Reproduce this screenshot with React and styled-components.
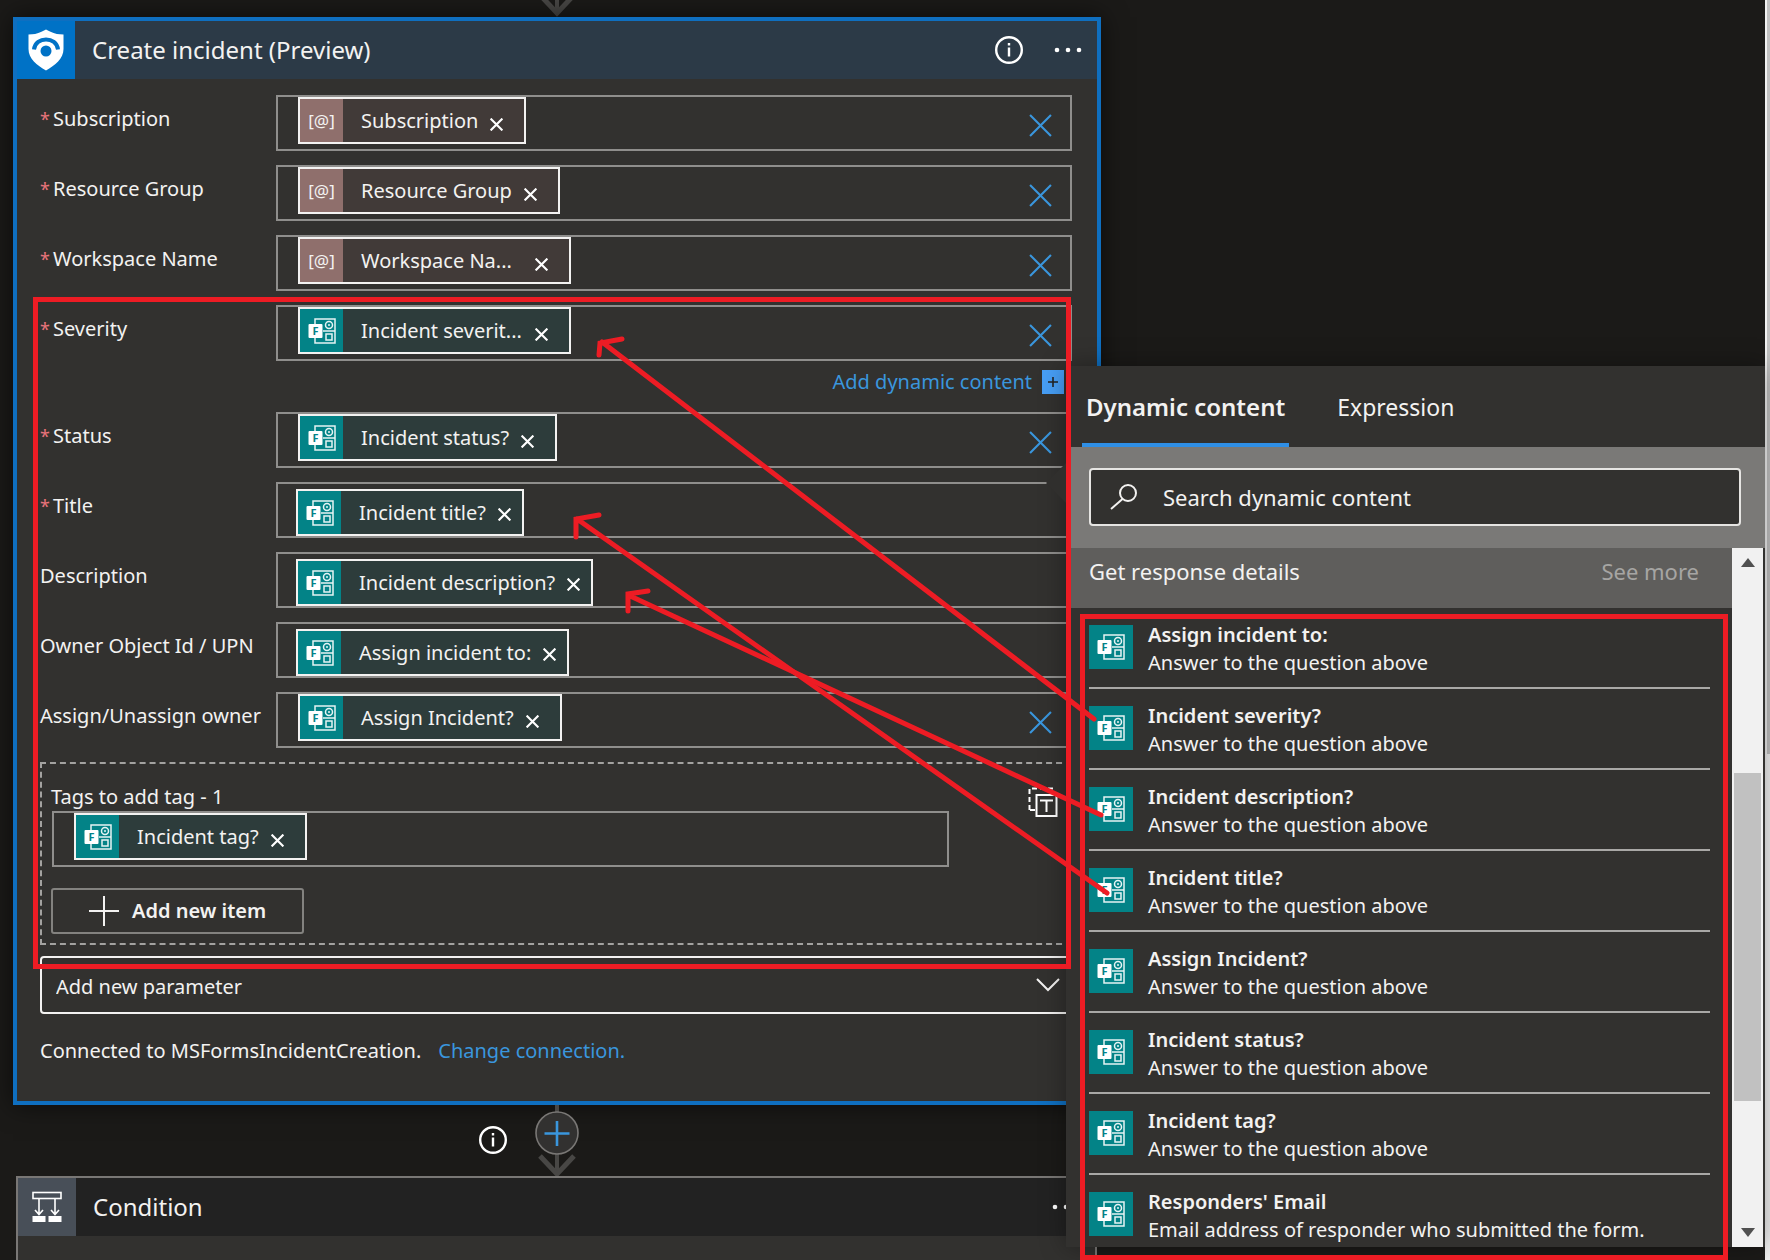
import React from "react";
import styled, { createGlobalStyle, css } from "styled-components";

const color = {
  page: "#1b1a18",
  surface: "#32312f",
  line: "#8f8e8c",
  text: "#f3f2f1",
  link: "#3a96dd",
  accent: "#0f6fc0",
  forms: "#038387",
  mark: "#ed1c24",
};

const GlobalStyle = createGlobalStyle`
  * { box-sizing: border-box; }
  html, body { margin: 0; background: ${color.page}; }
  body, button, input, select {
    font-family: "Segoe UI", "Noto Sans", "Open Sans", sans-serif;
    font-size: 20px;
    line-height: 28px;
    color: ${color.text};
  }
  button { background: none; border: 0; padding: 0; cursor: pointer; }
  svg { display: block; flex: none; }
`;

const Page = styled.main`
  position: relative;
  display: flex;
  height: 100vh;
  overflow: hidden;
`;

const Designer = styled.section`
  flex: 1;
  min-width: 0;
  padding-left: 13px;
  display: flex;
  flex-direction: column;
`;

const Connector = styled.div`
  position: relative;
  height: ${(p) => p.$height}px;
  flex: none;
  display: flex;
  justify-content: center;
`;

const InfoButton = styled.button`
  display: flex;
`;

const ConnectorInfo = styled(InfoButton)`
  position: absolute;
  top: 20px;
  right: calc(50% + 49px);
`;

const Card = styled.article`
  position: relative;
  flex: none;
  border: 4px solid ${color.accent};
  background: ${color.surface};
  box-shadow: 0 0 24px rgba(0, 0, 0, 0.6);
`;

const CardHeader = styled.header`
  display: flex;
  align-items: center;
  height: 58px;
  padding-right: 15px;
  gap: 30px;
  background: ${(p) => p.$bg};
`;

const HeaderIcon = styled.div`
  display: grid;
  place-items: center;
  width: 58px;
  height: 58px;
  background: ${(p) => p.$bg};
`;

const CardTitle = styled.h2`
  flex: 1;
  margin: 0 0 0 -13px;
  font-size: 24px;
  line-height: 32px;
  font-weight: 400;
`;

const CardBody = styled.div`
  padding: 16px 25px 36px 23px;
`;

const Row = styled.div`
  display: grid;
  grid-template-columns: 236px minmax(0, 1fr);
  margin-bottom: 14px;
`;

const Label = styled.label`
  padding-top: 10px;
  white-space: nowrap;
`;

const Required = styled.span`
  display: inline-block;
  width: 13px;
  font-size: 18px;
  color: #e8737b;
`;

const Field = styled.div`
  display: flex;
  align-items: ${(p) => (p.$low ? "flex-end" : "flex-start")};
  height: 56px;
  padding: 0 18px 0 ${(p) => (p.$low ? 18 : 20)}px;
  border: 2px solid ${color.line};
`;

const FieldInput = styled.input`
  flex: 1;
  min-width: 0;
  height: 48px;
  border: 0;
  outline: 0;
  background: transparent;
`;

const ClearButton = styled.button`
  margin-top: 17px;
`;

const Chip = styled.span`
  display: flex;
  height: 47px;
  border: 2px solid #f3f2f1;
  padding-right: ${(p) => (p.$low ? 11 : 21)}px;
  white-space: nowrap;
  background: ${(p) => (p.$kind === "forms" ? "#2d3c3b" : "#413a38")};
`;

const ChipIcon = styled.span`
  display: grid;
  place-items: center;
  width: 43px;
  margin-right: 18px;
  font-size: 17px;
  background: ${(p) => (p.$kind === "forms" ? color.forms : "#8f6f6c")};
`;

const ChipText = styled.span`
  min-width: ${(p) => (p.$clipped ? 162 : 0)}px;
  margin-right: 12px;
  line-height: 44px;
`;

const ChipRemove = styled.button`
  padding-top: ${(p) => (p.$low ? 4 : 8)}px;
`;

const DynamicLine = styled.div`
  display: flex;
  justify-content: flex-end;
  align-items: center;
  gap: 10px;
  height: 37px;
  padding: 4px 8px 0 0;
`;

const Link = styled.a`
  color: ${color.link};
  text-decoration: none;
`;

const PlusBox = styled.button`
  display: grid;
  place-items: center;
  width: 22px;
  height: 24px;
  background: #479ef5;
`;

const TagGroup = styled.fieldset`
  display: flex;
  justify-content: space-between;
  align-items: flex-start;
  margin: 0 0 11px;
  padding: 19px 12px 9px 9px;
  min-width: 0;
  border: 2px dashed #a3a2a0;
`;

const TagColumn = styled.div`
  flex: 1;
  max-width: 897px;
  display: flex;
  flex-direction: column;
  align-items: flex-start;
`;

const TagField = styled(Field)`
  width: 100%;
  margin: 0 0 21px 1px;
`;

const ModeButton = styled.button`
  margin-top: 4px;
`;

const AddItem = styled.button`
  display: flex;
  align-items: center;
  gap: 13px;
  height: 46px;
  padding: 0 36px;
  border: 2px solid #83827f;
  border-radius: 3px;
  font-weight: 600;
`;

const SelectWrap = styled.div`
  display: grid;
  align-items: center;
  & > * { grid-area: 1 / 1; }
  svg { justify-self: end; margin-right: 12px; pointer-events: none; }
`;

const ParameterSelect = styled.select`
  appearance: none;
  width: 100%;
  height: 58px;
  padding: 4px 14px 0;
  border: 2px solid ${color.text};
  border-radius: 4px;
  background: ${color.surface};
`;

const Connection = styled.p`
  display: flex;
  gap: 17px;
  margin: 23px 0 0;
`;

const ConditionCard = styled.article`
  flex: 1 0 90px;
  margin: 0 4px 0 3px;
  border: 2px solid #797775;
  background: ${color.surface};
`;

const Flyout = styled.aside`
  position: relative;
  flex: none;
  width: 699px;
  height: 881px;
  margin: 366px 0 0 -35px;
  background: ${color.surface};
  box-shadow: 0 0 24px rgba(0, 0, 0, 0.35);
`;

const Beak = styled.span`
  position: absolute;
  left: -20px;
  top: 97px;
  border: solid transparent;
  border-width: 20px 20px 20px 0;
  border-right-color: #302f2d;
`;

const Tabs = styled.div`
  display: flex;
  height: 81px;
  padding-left: 16px;
  gap: 44px;
`;

const Tab = styled.button`
  padding: 0 4px;
  font-size: ${(p) => (p.$active ? 24 : 23)}px;
  font-weight: ${(p) => (p.$active ? 600 : 400)};
  border-top: 4px solid transparent;
  border-bottom: 4px solid ${(p) => (p.$active ? "#2f8fe6" : "transparent")};
`;

const SearchArea = styled.div`
  height: 101px;
  padding: 21px 24px 0 23px;
  background: #7a7977;
`;

const SearchBox = styled.label`
  display: flex;
  align-items: center;
  gap: 25px;
  height: 58px;
  padding: 0 19px;
  border: 2px solid #e6e5e3;
  border-radius: 4px;
  background: ${color.surface};
`;

const SearchInput = styled.input`
  flex: 1;
  min-width: 0;
  border: 0;
  padding: 0;
  outline: 0;
  font-size: 22px;
  background: transparent;
  &::placeholder { color: ${color.text}; opacity: 1; }
`;

const Results = styled.div`
  display: flex;
  height: 699px;
`;

const ResultsMain = styled.div`
  flex: 1;
  min-width: 0;
`;

const GroupHeader = styled.div`
  display: flex;
  justify-content: space-between;
  height: 60px;
  padding: 9px 33px 0 23px;
  font-size: 22px;
  background: #5f5e5c;
`;

const SeeMore = styled.button`
  align-self: flex-start;
  font-size: 22px;
  color: #a6a5a3;
`;

const List = styled.ul`
  list-style: none;
  margin: 0 22px 0 23px;
  padding: 0;
`;

const Item = styled.li`
  height: 81px;
  padding-top: 13px;
  border-bottom: 2px solid #a9a8a6;
  &:last-child { border-bottom: 0; height: 72px; }
`;

const ItemButton = styled.button`
  display: flex;
  gap: 15px;
  text-align: left;
`;

const ItemIcon = styled.span`
  display: grid;
  place-items: center;
  width: 44px;
  height: 44px;
  margin-top: 4px;
  background: ${color.forms};
`;

const ItemText = styled.span`
  display: grid;
  white-space: nowrap;
`;

const ItemName = styled.strong`
  font-weight: 600;
`;

const Scrollbar = styled.div`
  display: flex;
  flex-direction: column;
  align-items: center;
  width: 31px;
  margin-right: 2px;
  padding: 10px 0;
  background: #f1f1f1;
`;

const Thumb = styled.div`
  width: 27px;
  height: 328px;
  margin: 206px 0 auto;
  background: #c1c1c1;
`;

const WindowScroll = styled.div`
  flex: none;
  width: 5px;
  padding-left: 2px;
  background: #f1f1f1;
`;

const WindowThumb = styled.div`
  height: 754px;
  background: #c1c1c1;
`;

const markBox = css`
  position: absolute;
  border: 5px solid ${color.mark};
  pointer-events: none;
`;

const FieldsMark = styled.div`
  ${markBox}
  z-index: 2;
  left: 33px;
  top: 297px;
  width: 1038px;
  height: 672px;
`;

const ResultsMark = styled.div`
  ${markBox}
  left: 14px;
  right: 37px;
  top: 248px;
  height: 646px;
`;

const Arrows = styled.svg`
  position: absolute;
  z-index: 3;
  left: 0;
  top: 0;
  pointer-events: none;
`;

const Cross = ({ size, stroke, width }) => (
  <svg width={size} height={size} viewBox="0 0 22 22" fill="none" stroke={stroke} strokeWidth={width}>
    <path d="M1 1L21 21M21 1L1 21" />
  </svg>
);

const FormsIcon = () => (
  <svg width="28" height="26" viewBox="0 0 28 26" fill="none" stroke="#e6f4f4" strokeWidth="1.5">
    <path d="M7 6V1H27V25H7V20M15 13H27" />
    <circle cx="21" cy="7" r="3.5" />
    <circle cx="21" cy="7" r="1" fill="#e6f4f4" stroke="none" />
    <rect x="18" y="16" width="6" height="6" />
    <rect x="0.5" y="6" width="14" height="14" rx="1" fill="#fff" stroke="none" />
    <text x="7.5" y="17" textAnchor="middle" fontSize="11" fontWeight="700" fill="#038387" stroke="none">F</text>
  </svg>
);

const InfoIcon = () => (
  <svg width="30" height="30" viewBox="0 0 30 30" fill="none" stroke="#fff" strokeWidth="2.4">
    <circle cx="15" cy="15" r="12.8" />
    <path d="M15 12.5V21.5M15 8V10.5" />
  </svg>
);

const Dots = () => (
  <svg width="28" height="6" viewBox="0 0 28 6" fill="#fff">
    <circle cx="3" cy="3" r="2.3" />
    <circle cx="14" cy="3" r="2.3" />
    <circle cx="25" cy="3" r="2.3" />
  </svg>
);

const ShieldIcon = () => (
  <svg width="36" height="42" viewBox="0 0 36 42" fill="none">
    <path d="M18 0.5C22 2 25 5.500 35.500 5.500V20C35.500 30 27 36 18 41.500C9 36 0.500 30 0.500 20V5.500C11 5.500 14 2 18 0.500Z" fill="#fff" />
    <path d="M6 20.500C7.500 7 28.500 7 30 20.500" stroke="#0072c6" strokeWidth="4" />
    <circle cx="18" cy="22" r="5.500" fill="#0072c6" />
  </svg>
);

const ConditionIcon = () => (
  <svg width="30" height="32" viewBox="0 0 30 32" fill="none" stroke="#fff" strokeWidth="1.6">
    <rect x="1" y="1.500" width="28" height="6" />
    <path d="M7 8V23M3 19L7 23.500L11 19M23 8V23M19 19L23 23.500L27 19" />
    <path d="M0.500 25H13.500V31H0.500ZM16.500 25H29.500V31H16.500Z" fill="#fff" stroke="none" />
  </svg>
);

const TextModeIcon = () => (
  <svg width="30" height="30" viewBox="0 0 30 30" fill="none" stroke="#fff" strokeWidth="2">
    <path d="M1.500 23V1.500H25" strokeDasharray="5 3" />
    <path d="M2 23H7" />
    <rect x="8.500" y="8" width="20" height="21" />
    <path d="M12 13.500H25M18.500 13.500V25" />
  </svg>
);

const ArrowHead = ({ color: stroke }) => (
  <path d="M0 0L17 18L34 0" stroke={stroke} strokeWidth="5" fill="none" />
);

const Token = ({ kind, text, low, clipped }) => (
  <Chip $kind={kind} $low={low}>
    <ChipIcon $kind={kind}>{kind === "forms" ? <FormsIcon /> : "[@]"}</ChipIcon>
    <ChipText $clipped={clipped}>{text}</ChipText>
    <ChipRemove $low={low} aria-label={`Remove ${text}`}>
      <Cross size={13} stroke="#fff" width={3.6} />
    </ChipRemove>
  </Chip>
);

const fields = [
  { id: "subscription", label: "Subscription", required: true, kind: "param", text: "Subscription", clear: true },
  { id: "group", label: "Resource Group", required: true, kind: "param", text: "Resource Group", clear: true },
  { id: "workspace", label: "Workspace Name", required: true, kind: "param", text: "Workspace Na...", clipped: true, clear: true },
  { id: "severity", label: "Severity", required: true, kind: "forms", text: "Incident severit...", clipped: true, clear: true, dynamic: true },
  { id: "status", label: "Status", required: true, kind: "forms", text: "Incident status?", clear: true },
  { id: "title", label: "Title", required: true, kind: "forms", text: "Incident title?", low: true },
  { id: "description", label: "Description", kind: "forms", text: "Incident description?", low: true },
  { id: "owner", label: "Owner Object Id / UPN", kind: "forms", text: "Assign incident to:", low: true },
  { id: "assign", label: "Assign/Unassign owner", kind: "forms", text: "Assign Incident?", clear: true },
];

const answer = "Answer to the question above";
const results = [
  ["Assign incident to:", answer],
  ["Incident severity?", answer],
  ["Incident description?", answer],
  ["Incident title?", answer],
  ["Assign Incident?", answer],
  ["Incident status?", answer],
  ["Incident tag?", answer],
  ["Responders' Email", "Email address of responder who submitted the form."],
];

const FieldRow = ({ field }) => (
  <Row>
    <Label htmlFor={field.id}>
      {field.required && <Required>*</Required>}
      {field.label}
    </Label>
    <div>
      <Field $low={field.low}>
        <Token {...field} />
        <FieldInput id={field.id} />
        {field.clear && (
          <ClearButton aria-label={`Clear ${field.label}`}>
            <Cross size={23} stroke={color.link} width={2} />
          </ClearButton>
        )}
      </Field>
      {field.dynamic && (
        <DynamicLine>
          <Link href="#dynamic">Add dynamic content</Link>
          <PlusBox aria-label="Add dynamic content">
            <svg width="10" height="10" viewBox="0 0 10 10" stroke="#222" strokeWidth="1.6">
              <path d="M5 0V10M0 5H10" />
            </svg>
          </PlusBox>
        </DynamicLine>
      )}
    </div>
  </Row>
);

export default function App() {
  return (
    <Page>
      <GlobalStyle />
      <Designer>
        <Connector $height={17}>
          <svg width="34" height="17" viewBox="0 5 34 17">
            <path d="M17 0V20" stroke="#484745" strokeWidth="4" />
            <ArrowHead color="#484745" />
          </svg>
        </Connector>

        <Card>
          <CardHeader $bg="#2c3a47">
            <HeaderIcon $bg="#0072c6"><ShieldIcon /></HeaderIcon>
            <CardTitle>Create incident (Preview)</CardTitle>
            <InfoButton aria-label="About this action"><InfoIcon /></InfoButton>
            <button aria-label="More commands"><Dots /></button>
          </CardHeader>
          <CardBody>
            {fields.map((field) => <FieldRow key={field.id} field={field} />)}
            <TagGroup>
              <TagColumn>
                <label htmlFor="tag">Tags to add tag - 1</label>
                <TagField>
                  <Token kind="forms" text="Incident tag?" />
                  <FieldInput id="tag" />
                </TagField>
                <AddItem>
                  <svg width="30" height="30" viewBox="0 0 30 30" stroke={color.text} strokeWidth="2">
                    <path d="M15 0V30M0 15H30" />
                  </svg>
                  Add new item
                </AddItem>
              </TagColumn>
              <ModeButton aria-label="Switch to entire array input"><TextModeIcon /></ModeButton>
            </TagGroup>
            <SelectWrap>
              <ParameterSelect aria-label="Add new parameter" defaultValue="">
                <option value="">Add new parameter</option>
              </ParameterSelect>
              <svg width="24" height="14" viewBox="0 0 24 14" fill="none" stroke={color.text} strokeWidth="2">
                <path d="M1 1L12 12L23 1" />
              </svg>
            </SelectWrap>
            <Connection>
              Connected to MSFormsIncidentCreation.
              <Link href="#connection">Change connection.</Link>
            </Connection>
          </CardBody>
        </Card>

        <Connector $height={71}>
          <ConnectorInfo aria-label="About this step"><InfoIcon /></ConnectorInfo>
          <button aria-label="Insert a new step">
            <svg width="44" height="71" viewBox="0 0 44 71" fill="none">
              <path d="M22 0V68" stroke="#484745" strokeWidth="4" />
              <g transform="translate(5 51)"><ArrowHead color="#484745" /></g>
              <circle cx="22" cy="28" r="21" fill="#323130" stroke="#797775" strokeWidth="1.600" />
              <path d="M22 16V41M9.500 28.500H34.500" stroke={color.link} strokeWidth="2.600" />
            </svg>
          </button>
        </Connector>

        <ConditionCard>
          <CardHeader $bg="#222222">
            <HeaderIcon $bg="#484f58"><ConditionIcon /></HeaderIcon>
            <CardTitle>Condition</CardTitle>
            <button aria-label="More commands"><Dots /></button>
          </CardHeader>
        </ConditionCard>
      </Designer>

      <Flyout>
        <Beak />
        <Tabs role="tablist">
          <Tab $active role="tab" aria-selected="true">Dynamic content</Tab>
          <Tab role="tab" aria-selected="false">Expression</Tab>
        </Tabs>
        <SearchArea>
          <SearchBox>
            <svg width="28" height="26" viewBox="0 0 28 26" fill="none" stroke={color.text} strokeWidth="2">
              <circle cx="18" cy="9" r="8" />
              <path d="M12.500 15L1 25" />
            </svg>
            <SearchInput type="search" aria-label="Search dynamic content" placeholder="Search dynamic content" />
          </SearchBox>
        </SearchArea>
        <Results>
          <ResultsMain>
            <GroupHeader>
              <span>Get response details</span>
              <SeeMore>See more</SeeMore>
            </GroupHeader>
            <List>
              {results.map(([name, note]) => (
                <Item key={name}>
                  <ItemButton>
                    <ItemIcon><FormsIcon /></ItemIcon>
                    <ItemText>
                      <ItemName>{name}</ItemName>
                      <span>{note}</span>
                    </ItemText>
                  </ItemButton>
                </Item>
              ))}
            </List>
          </ResultsMain>
          <Scrollbar>
            <svg width="14" height="9" viewBox="0 0 14 9" fill="#505050"><path d="M0 9L7 0L14 9Z" /></svg>
            <Thumb />
            <svg width="14" height="9" viewBox="0 0 14 9" fill="#505050"><path d="M0 0L7 9L14 0Z" /></svg>
          </Scrollbar>
        </Results>
        <ResultsMark />
      </Flyout>

      <WindowScroll><WindowThumb /></WindowScroll>

      <FieldsMark />
      <Arrows width="1120" height="910" viewBox="0 0 1120 910" fill="none" stroke={color.mark} strokeWidth="5" strokeLinecap="round">
        <path d="M602 342L1094 719M622 339L600 343L599 355" />
        <path d="M577 519L1107 893M599 515L576 519V537" />
        <path d="M628 595L1101 815M648 591L628 594V611" />
      </Arrows>
    </Page>
  );
}
